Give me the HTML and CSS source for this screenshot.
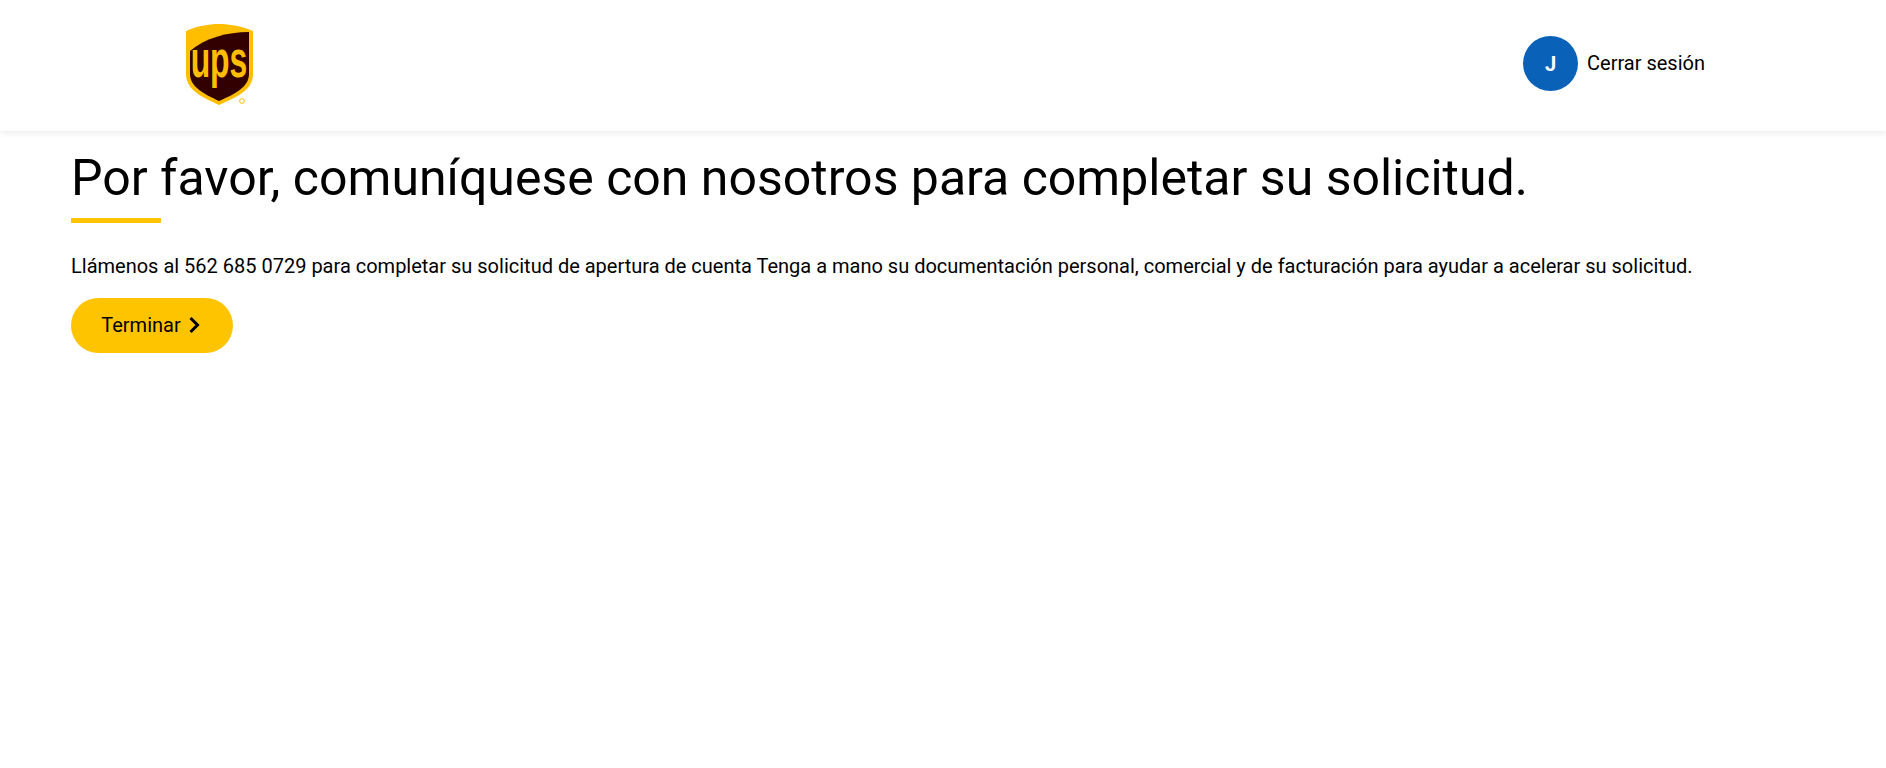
FILE: index.html
```html
<!DOCTYPE html>
<html lang="es">
<head>
    <meta charset="UTF-8">
    <meta name="viewport" content="width=device-width, initial-scale=1.0">
    <title>UPS</title>
    <link rel="stylesheet" href="styles.css">
</head>
<body>
    <header class="site-header">
        <a class="logo" href="#" aria-label="UPS">
            <svg width="70" height="84" viewBox="0 0 70 84">
                <path d="M1 7 C12 2 24 0 34 0 C45 0 56 2 68 7 V50 C68 66 52 73 34 81 C17 73 1 66 1 50 Z" fill="#ffbe00"/>
                <path d="M5 27 C20 14 42 8 64 8 V50 C64 63 50 70 34 77 C19 70 5 63 5 50 Z" fill="#330000"/>
                <text class="logo-text" x="0" y="0" transform="translate(34 53) scale(0.76 1.22)" text-anchor="middle">ups</text>
                <circle cx="57" cy="77" r="2.4" fill="none" stroke="#ffbe00" stroke-width="1"/>
            </svg>
        </a>
        <div class="user-menu">
            <span class="avatar">J</span>
            <a class="logout" href="#">Cerrar sesión</a>
        </div>
    </header>
    <main class="content">
        <h1>Por favor, comuníquese con nosotros para completar su solicitud.</h1>
        <div class="title-bar"></div>
        <p>Llámenos al 562 685 0729 para completar su solicitud de apertura de cuenta Tenga a mano su documentación personal, comercial y de facturación para ayudar a acelerar su solicitud.</p>
        <button class="finish-btn">Terminar
            <svg width="14" height="18" viewBox="0 0 14 18"><path d="M3.5 2 L10.5 9 L3.5 16" fill="none" stroke="#000" stroke-width="3"/></svg>
        </button>
    </main>
</body>
</html>
```

FILE: styles.css
```css
body {
    font-family: Roboto, Arial, sans-serif;
    margin: 0;
    background-color: #fff;
    color: #000;
}
.site-header {
    height: 131px;
    display: flex;
    justify-content: space-between;
    align-items: center;
    padding: 0 181px 0 185px;
    background-color: #fff;
    box-shadow: 0 2px 6px rgba(0, 0, 0, 0.08);
}
.logo {
    display: block;
    height: 84px;
    margin-top: 1px;
}
.logo-text {
    font-family: "Liberation Sans", Arial, sans-serif;
    font-size: 42px;
    font-weight: 700;
    fill: #ffbe00;
}
.user-menu {
    display: flex;
    align-items: center;
    gap: 9px;
    margin-top: -4px;
}
.avatar {
    width: 55px;
    height: 55px;
    border-radius: 50%;
    background-color: #0a62b8;
    color: #fff;
    font-weight: 700;
    font-size: 20px;
    display: flex;
    align-items: center;
    justify-content: center;
}
.logout {
    font-size: 20px;
    color: #000;
    text-decoration: none;
    margin-bottom: 2px;
}
.content {
    padding: 17px 71px;
}
h1 {
    font-size: 50px;
    font-weight: 400;
    line-height: 60px;
    margin: 0;
}
.title-bar {
    width: 90px;
    height: 5px;
    background-color: #ffc400;
    margin-top: 10px;
}
p {
    font-size: 20px;
    line-height: 24px;
    margin: 31px 0 20px;
}
.finish-btn {
    width: 162px;
    height: 55px;
    border: none;
    border-radius: 28px;
    background-color: #ffc400;
    color: #000;
    font-family: inherit;
    font-size: 20px;
    font-weight: 400;
    display: flex;
    align-items: center;
    justify-content: center;
    gap: 6px;
    padding: 0 2px 2px 0;
    cursor: pointer;
}
```
